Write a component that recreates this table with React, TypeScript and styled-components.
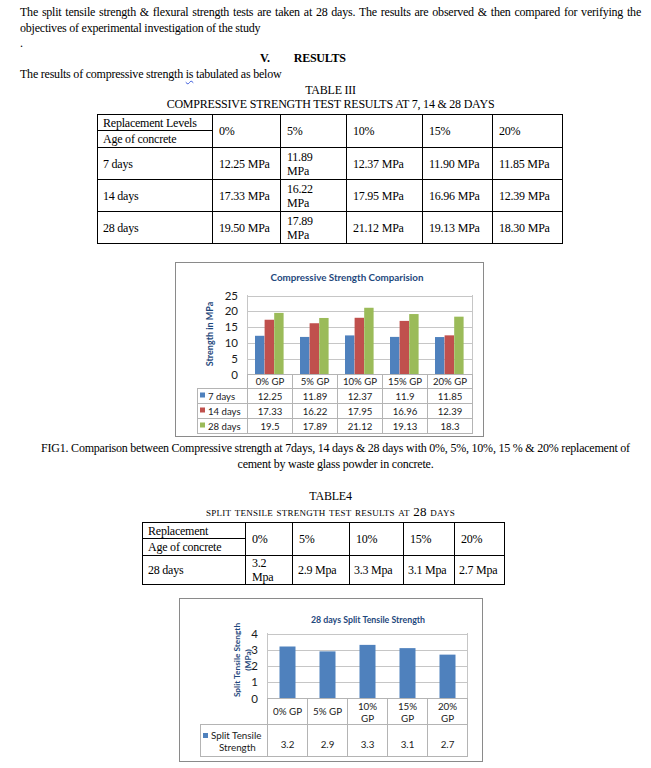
import React from "react";
import styled, { createGlobalStyle } from "styled-components";

const BLUE = "#4F81BD";
const RED = "#C0504D";
const GREEN = "#9BBB59";
const NAVY = "#1F497D";
const GRID = "#C6C6C6";
const TABLE_LINE = "#B4B4B4";

const GlobalStyle = createGlobalStyle`
  html, body { margin: 0; padding: 0; background: #ffffff; }
  body { font-family: "Liberation Serif", "Times New Roman", serif; color: #000; }
`;

const Page = styled.div`
  width: 651px;
  box-sizing: border-box;
  padding: 4px 10px 8px 20px;
  font-size: 12px;
  line-height: 16px;
  letter-spacing: -0.22px;
`;

const Para = styled.p<{ $align?: "left" | "center" | "justify"; $mt?: number; $lh?: number; $pad?: string }>`
  margin: ${(p) => p.$mt ?? 0}px 0 0 0;
  padding: ${(p) => p.$pad ?? "0"};
  line-height: ${(p) => p.$lh ?? 16}px;
  text-align: ${(p) => p.$align ?? "left"};
`;

const SpellMark = styled.span`
  text-decoration: underline wavy #3b5bdb;
  text-decoration-thickness: 1px;
  text-underline-offset: 2px;
`;

const SectionHeading = styled.h2`
  margin: 0;
  display: flex;
  gap: 24px;
  padding-left: 240px;
  font-size: 12px;
  line-height: 15px;
  font-weight: bold;
`;

const SmallCapsTitle = styled.p`
  margin: 0;
  text-align: center;
  font-variant: small-caps;
  font-size: 13px;
  letter-spacing: 0.25px;
  line-height: 16px;
`;

const DataTable = styled.table<{ $ml: number; $mt: number }>`
  border-collapse: collapse;
  table-layout: fixed;
  margin: ${(p) => p.$mt}px 0 0 ${(p) => p.$ml}px;
  font-size: 12px;
  line-height: 14px;
`;

const Cell = styled.td<{ $h?: number; $pl?: number }>`
  border: 1px solid #000;
  padding: 0 4px 0 ${(p) => p.$pl ?? 6}px;
  height: ${(p) => (p.$h ? `${p.$h}px` : "auto")};
  vertical-align: middle;
  text-align: left;
  white-space: nowrap;
  box-sizing: border-box;
`;

const ChartFrame = styled.div<{ $w: number; $h: number; $ml: number; $mt: number }>`
  width: ${(p) => p.$w}px;
  height: ${(p) => p.$h}px;
  margin: ${(p) => p.$mt}px 0 0 ${(p) => p.$ml}px;
  border: 1px solid #8a8a8a;
  box-sizing: border-box;
  background: #fff;
  overflow: hidden;
  letter-spacing: 0;
  svg { display: block; }
`;

const ChartTitle = styled.text<{ $size: number }>`
  font-family: Lato, "Open Sans", sans-serif;
  font-weight: 700;
  font-size: ${(p) => p.$size}px;
  fill: ${NAVY};
`;

const AxisTitle = styled.text<{ $size: number }>`
  font-family: Lato, "Open Sans", sans-serif;
  font-weight: 700;
  font-size: ${(p) => p.$size}px;
  fill: ${NAVY};
`;

const TickLabel = styled.text`
  font-family: Lato, "Open Sans", sans-serif;
  font-size: 11.5px;
  fill: #1a1a1a;
`;

const TableText = styled.text<{ $size: number }>`
  font-family: Lato, "Open Sans", sans-serif;
  font-size: ${(p) => p.$size}px;
  fill: #1a1a1a;
`;

const Line = styled.line<{ $c?: string }>`
  stroke: ${(p) => p.$c ?? GRID};
  stroke-width: 1;
  shape-rendering: crispEdges;
`;

const cats1 = ["0% GP", "5% GP", "10% GP", "15% GP", "20% GP"];
const series1 = [
  { name: "7 days", color: BLUE, values: [12.25, 11.89, 12.37, 11.9, 11.85] },
  { name: "14 days", color: RED, values: [17.33, 16.22, 17.95, 16.96, 12.39] },
  { name: "28 days", color: GREEN, values: [19.5, 17.89, 21.12, 19.13, 18.3] },
];

function CompressiveChart() {
  const x0 = 72;
  const cw = 45;
  const yBase = 112.5;
  const scale = 3.16;
  const xEnd = x0 + cw * 5;
  const rows = [126.5, 141.5, 156.5, 171.5];
  const ticks = [0, 5, 10, 15, 20, 25];
  return (
    <ChartFrame $w={309} $h={175} $ml={155} $mt={18}>
      <svg width={307} height={173} viewBox="1 1 307 173">
        <ChartTitle $size={9.8} x={172} y={19} textAnchor="middle">
          Compressive Strength Comparision
        </ChartTitle>
        {ticks.slice(1).map((v) => (
          <Line key={v} x1={x0} x2={xEnd} y1={Math.round(yBase - v * scale) + 0.5} y2={Math.round(yBase - v * scale) + 0.5} />
        ))}
        <Line x1={x0 + 0.5} x2={x0 + 0.5} y1={33} y2={yBase} />
        <Line x1={xEnd + 0.5} x2={xEnd + 0.5} y1={33} y2={yBase} />
        {ticks.map((v) => (
          <TickLabel key={v} x={63} y={yBase - v * scale + 4} textAnchor="end">
            {v}
          </TickLabel>
        ))}
        <AxisTitle $size={9} transform="translate(38,72) rotate(-90)" textAnchor="middle">
          Strength in MPa
        </AxisTitle>
        {cats1.map((c, i) =>
          series1.map((s, j) => {
            const h = s.values[i] * scale;
            return (
              <rect key={`${i}-${j}`} x={x0 + cw * i + 8 + j * 9.6} y={yBase - h} width={9.4} height={h} fill={s.color} />
            );
          })
        )}
        <Line $c={TABLE_LINE} x1={x0} x2={xEnd + 1} y1={yBase} y2={yBase} />
        {rows.map((y) => (
          <Line key={y} $c={TABLE_LINE} x1={22} x2={xEnd + 1} y1={y} y2={y} />
        ))}
        <Line $c={TABLE_LINE} x1={22.5} x2={22.5} y1={rows[0]} y2={rows[3]} />
        {[0, 1, 2, 3, 4, 5].map((i) => (
          <Line key={i} $c={TABLE_LINE} x1={x0 + cw * i + 0.5} x2={x0 + cw * i + 0.5} y1={yBase} y2={rows[3]} />
        ))}
        {cats1.map((c, i) => (
          <TableText key={c} $size={9.6} x={x0 + cw * i + cw / 2 + 0.5} y={123} textAnchor="middle">
            {c}
          </TableText>
        ))}
        {series1.map((s, j) => {
          const top = rows[j];
          const base = top + 11;
          return (
            <g key={s.name}>
              <rect x={25} y={top + 4} width={5} height={5} fill={s.color} />
              <TableText $size={9.6} x={33} y={base}>
                {s.name}
              </TableText>
              {s.values.map((v, i) => (
                <TableText key={i} $size={9.6} x={x0 + cw * i + cw / 2 + 0.5} y={base} textAnchor="middle">
                  {v}
                </TableText>
              ))}
            </g>
          );
        })}
      </svg>
    </ChartFrame>
  );
}

const cats2 = [["0% GP"], ["5% GP"], ["10%", "GP"], ["15%", "GP"], ["20%", "GP"]];
const values2 = [3.2, 2.9, 3.3, 3.1, 2.7];

function SplitTensileChart() {
  const x0 = 88;
  const cw = 40;
  const yBase = 100.5;
  const scale = 16.25;
  const xEnd = x0 + cw * 5;
  const headerBottom = 126.5;
  const rowBottom = 158.5;
  return (
    <ChartFrame $w={304} $h={164} $ml={159} $mt={13}>
      <svg width={302} height={162} viewBox="1 1 302 162">
        <ChartTitle $size={8.8} x={189} y={25} textAnchor="middle">
          28 days Split Tensile Strength
        </ChartTitle>
        {[1, 2, 3, 4].map((v) => (
          <Line key={v} x1={x0} x2={xEnd} y1={Math.round(yBase - v * scale) + 0.5} y2={Math.round(yBase - v * scale) + 0.5} />
        ))}
        <Line x1={x0 + 0.5} x2={x0 + 0.5} y1={35} y2={yBase} />
        <Line x1={xEnd + 0.5} x2={xEnd + 0.5} y1={35} y2={yBase} />
        {[0, 1, 2, 3, 4].map((v) => (
          <TickLabel key={v} x={79} y={yBase - v * scale + 4} textAnchor="end">
            {v}
          </TickLabel>
        ))}
        <g transform="translate(61,62) rotate(-90)">
          <AxisTitle $size={8.3} x={0} y={0} textAnchor="middle">
            Split Tensile Stength
          </AxisTitle>
          <AxisTitle $size={8.3} x={0} y={10.5} textAnchor="middle">
            (MPa)
          </AxisTitle>
        </g>
        {values2.map((v, i) => (
          <rect key={i} x={x0 + cw * i + 12.5} y={yBase - v * scale} width={16} height={v * scale} fill={BLUE} />
        ))}
        <Line $c={TABLE_LINE} x1={x0} x2={xEnd + 1} y1={yBase} y2={yBase} />
        <Line $c={TABLE_LINE} x1={21} x2={xEnd + 1} y1={headerBottom} y2={headerBottom} />
        <Line $c={TABLE_LINE} x1={21} x2={xEnd + 1} y1={rowBottom} y2={rowBottom} />
        <Line $c={TABLE_LINE} x1={21.5} x2={21.5} y1={headerBottom} y2={rowBottom} />
        {[0, 1, 2, 3, 4, 5].map((i) => (
          <Line key={i} $c={TABLE_LINE} x1={x0 + cw * i + 0.5} x2={x0 + cw * i + 0.5} y1={yBase} y2={rowBottom} />
        ))}
        {cats2.map((lines, i) =>
          lines.length === 1 ? (
            <TableText key={i} $size={9.8} x={x0 + cw * i + cw / 2 + 0.5} y={117} textAnchor="middle">
              {lines[0]}
            </TableText>
          ) : (
            <g key={i}>
              <TableText $size={9.8} x={x0 + cw * i + cw / 2 + 0.5} y={111.5} textAnchor="middle">
                {lines[0]}
              </TableText>
              <TableText $size={9.8} x={x0 + cw * i + cw / 2 + 0.5} y={124} textAnchor="middle">
                {lines[1]}
              </TableText>
            </g>
          )
        )}
        <rect x={24} y={135} width={5} height={5} fill={BLUE} />
        <TableText $size={9.8} x={32} y={141}>
          Split Tensile
        </TableText>
        <TableText $size={9.8} x={40} y={152.5}>
          Strength
        </TableText>
        {values2.map((v, i) => (
          <TableText key={i} $size={9.8} x={x0 + cw * i + cw / 2 + 0.5} y={150} textAnchor="middle">
            {v}
          </TableText>
        ))}
      </svg>
    </ChartFrame>
  );
}

const t1Cols = [115, 68, 66, 76, 70, 70];
const t1Rows = [
  { age: "7 days", vals: ["12.25 MPa", ["11.89", "MPa"], "12.37 MPa", "11.90 MPa", "11.85 MPa"] },
  { age: "14 days", vals: ["17.33 MPa", ["16.22", "MPa"], "17.95 MPa", "16.96 MPa", "12.39 MPa"] },
  { age: "28 days", vals: ["19.50 MPa", ["17.89", "MPa"], "21.12 MPa", "19.13 MPa", "18.30 MPa"] },
];

function renderVal(v: string | string[]) {
  if (Array.isArray(v)) {
    return (
      <>
        {v[0]}
        <br />
        {v[1]}
      </>
    );
  }
  return v;
}

function CompressiveTable() {
  return (
    <DataTable $ml={77} $mt={3} style={{ width: t1Cols.reduce((a, b) => a + b, 0) }}>
      <colgroup>
        {t1Cols.map((w, i) => (
          <col key={i} style={{ width: w }} />
        ))}
      </colgroup>
      <tbody>
        <tr>
          <Cell $h={16} $pl={5}>Replacement Levels</Cell>
          {["0%", "5%", "10%", "15%", "20%"].map((h) => (
            <Cell key={h} rowSpan={2}>
              {h}
            </Cell>
          ))}
        </tr>
        <tr>
          <Cell $h={17} $pl={5}>Age of concrete</Cell>
        </tr>
        {t1Rows.map((r) => (
          <tr key={r.age}>
            <Cell $h={32} $pl={5}>{r.age}</Cell>
            {r.vals.map((v, i) => (
              <Cell key={i}>{renderVal(v)}</Cell>
            ))}
          </tr>
        ))}
      </tbody>
    </DataTable>
  );
}

const t2Cols = [103, 47, 57, 54, 51, 50];

function SplitTable() {
  return (
    <DataTable $ml={122} $mt={2} style={{ width: t2Cols.reduce((a, b) => a + b, 0) }}>
      <colgroup>
        {t2Cols.map((w, i) => (
          <col key={i} style={{ width: w }} />
        ))}
      </colgroup>
      <tbody>
        <tr>
          <Cell $h={16} $pl={5}>Replacement</Cell>
          {["0%", "5%", "10%", "15%", "20%"].map((h) => (
            <Cell key={h} rowSpan={2}>
              {h}
            </Cell>
          ))}
        </tr>
        <tr>
          <Cell $h={17} $pl={5}>Age of concrete</Cell>
        </tr>
        <tr>
          <Cell $h={29} $pl={5}>28 days</Cell>
          <Cell>{renderVal(["3.2", "Mpa"])}</Cell>
          <Cell $pl={5}>2.9 Mpa</Cell>
          <Cell $pl={4}>3.3 Mpa</Cell>
          <Cell $pl={4}>3.1 Mpa</Cell>
          <Cell $pl={4}>2.7 Mpa</Cell>
        </tr>
      </tbody>
    </DataTable>
  );
}

export default function App() {
  return (
    <>
      <GlobalStyle />
      <Page>
        <Para $align="justify">
          The split tensile strength &amp; flexural strength tests are taken at 28 days. The results are observed &amp; then compared for verifying the objectives of experimental investigation of the study
        </Para>
        <Para $lh={15}>.</Para>
        <SectionHeading>
          <span>V.</span>
          <span>RESULTS</span>
        </SectionHeading>
        <Para $lh={17}>
          The results of compressive strength <SpellMark>is</SpellMark> tabulated as below
        </Para>
        <Para $align="center" $lh={14}>TABLE III</Para>
        <Para $align="center" $lh={14}>COMPRESSIVE STRENGTH TEST RESULTS AT 7, 14 &amp; 28 DAYS</Para>
        <CompressiveTable />
        <CompressiveChart />
        <Para $align="center" $mt={3} $pad="0 0 0 10px">
          FIG1. Comparison between Compressive strength at 7days, 14 days &amp; 28 days with 0%, 5%, 10%, 15 % &amp; 20% replacement of cement by waste glass powder in concrete.
        </Para>
        <Para $align="center" $mt={16}>TABLE4</Para>
        <SmallCapsTitle>split tensile strength test results at 28 days</SmallCapsTitle>
        <SplitTable />
        <SplitTensileChart />
      </Page>
    </>
  );
}
